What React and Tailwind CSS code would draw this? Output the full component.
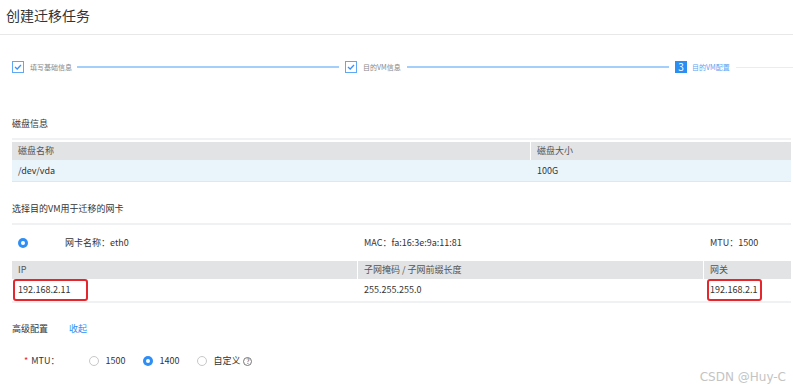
import React from 'react';

const font = { fontFamily: '"Noto Sans CJK SC", "Noto Sans", sans-serif' };

const CheckStep = ({ label, width }) => (
  <>
    <div className="w-[12px] h-[12px] border border-[#5ea8f5] bg-white flex items-center justify-center">
      <svg width="8" height="6" viewBox="0 0 8 6" fill="none">
        <path d="M1 3 L3.2 5 L7 1" stroke="#3d92f2" strokeWidth="1.3" />
      </svg>
    </div>
    <span className={`ml-[6px] text-[7px] leading-[12px] text-[#888] whitespace-nowrap ${width}`}>{label}</span>
  </>
);

const Radio = ({ checked }) =>
  checked ? (
    <span className="w-[10px] h-[10px] rounded-full bg-[#2f8ef5] flex items-center justify-center">
      <span className="w-[4px] h-[4px] rounded-full bg-white" />
    </span>
  ) : (
    <span className="w-[10px] h-[10px] rounded-full border border-[#c8c8c8] bg-white" />
  );

const App = () => {
  return (
    <div className="w-[793px] h-[391px] bg-white relative overflow-hidden text-[#333]" style={font}>
      {/* title */}
      <div className="h-[35px] border-b border-[#e8e8e8] pl-[6px] pt-[4px]">
        <h1 className="text-[14px] leading-[22px] text-[#333]">创建迁移任务</h1>
      </div>

      {/* stepper */}
      <div className="mt-[26px] pl-[12px] flex items-center h-[12px]">
        <CheckStep label="填写基础信息" width="w-[41px]" />
        <div className="ml-[6px] w-[262px] h-[1.5px] bg-[#a3cffa]" />
        <div className="ml-[6px]" />
        <CheckStep label="目的VM信息" width="w-[38px]" />
        <div className="ml-[6px] w-[262px] h-[1.5px] bg-[#a3cffa]" />
        <div className="ml-[6px] w-[12px] h-[12px] bg-[#2b8ef3] text-white text-[10px] leading-[12px] text-center">3</div>
        <span className="ml-[5px] w-[38px] text-[7px] leading-[12px] text-[#5aa2f2] whitespace-nowrap">目的VM配置</span>
        <div className="ml-[6px] flex-1 h-[1px] bg-[#ececec]" />
      </div>

      <div className="pl-[12px] pr-[2px]">
        {/* disk info */}
        <div className="mt-[45px] text-[9px] leading-[12px] text-[#333]">磁盘信息</div>
        <div className="mt-[8px] h-[2px] bg-[#f0f1f2]" />
        <div className="mt-[2px] text-[9px]">
          <div className="grid grid-cols-[519px_1fr] h-[18px] bg-[#e1e3e5] text-[#555]">
            <div className="pl-[6px] leading-[18px] border-r border-white">磁盘名称</div>
            <div className="pl-[6px] leading-[18px]">磁盘大小</div>
          </div>
          <div className="grid grid-cols-[519px_1fr] h-[22px] bg-[#eaf5fb] border-b border-[#e6e6e6]">
            <div className="pl-[6px] leading-[22px]">/dev/vda</div>
            <div className="pl-[6px] leading-[22px]">100G</div>
          </div>
        </div>

        {/* nic */}
        <div className="mt-[21px] text-[9px] leading-[12px] text-[#333]">选择目的VM用于迁移的网卡</div>
        <div className="mt-[8px] h-[2px] bg-[#f0f1f2]" />
        <div className="grid grid-cols-[346px_346px_1fr] h-[36px] items-center text-[9px]">
          <div className="pl-[6px] flex items-center">
            <Radio checked />
            <span className="ml-[37px]">网卡名称：eth0</span>
          </div>
          <div className="pl-[6px]">MAC：fa:16:3e:9a:11:81</div>
          <div className="pl-[6px]">MTU：1500</div>
        </div>
        <div className="text-[9px]">
          <div className="grid grid-cols-[346px_346px_1fr] h-[18px] bg-[#e1e3e5] text-[#555]">
            <div className="pl-[6px] leading-[18px] border-r border-white">IP</div>
            <div className="pl-[6px] leading-[18px] border-r border-white">子网掩码 / 子网前缀长度</div>
            <div className="pl-[6px] leading-[18px]">网关</div>
          </div>
          <div className="grid grid-cols-[346px_346px_1fr] h-[24px] bg-white border-b-2 border-[#f0f1f2]">
            <div className="relative pl-[6px] leading-[22px]">
              192.168.2.11
              <span className="absolute left-[1px] top-0 w-[75px] h-[22px] border-2 border-[#e5262c] rounded-[3px]" />
            </div>
            <div className="pl-[6px] leading-[22px]">255.255.255.0</div>
            <div className="relative pl-[6px] leading-[22px]">
              192.168.2.1
              <span className="absolute left-[3px] top-0 w-[55px] h-[22px] border-2 border-[#e5262c] rounded-[3px]" />
            </div>
          </div>
        </div>

        {/* advanced */}
        <div className="mt-[20px] flex text-[9px] leading-[12px]">
          <span className="text-[#333]">高级配置</span>
          <span className="ml-[21px] text-[#2f8ef5]">收起</span>
        </div>
        <div className="mt-[20px] flex items-center text-[9px] leading-[12px]">
          <span className="ml-[12px] text-[#e5262c]">*</span>
          <span className="ml-[3px]">MTU：</span>
          <span className="ml-[30px] flex items-center"><Radio /></span>
          <span className="ml-[6px]">1500</span>
          <span className="ml-[18px] flex items-center"><Radio checked /></span>
          <span className="ml-[6px]">1400</span>
          <span className="ml-[18px] flex items-center"><Radio /></span>
          <span className="ml-[6px]">自定义</span>
          <span className="ml-[3px] w-[9px] h-[9px] rounded-full border border-[#777] text-[7px] leading-[7px] text-center text-[#555]">?</span>
        </div>
      </div>

      {/* watermark */}
      <div
        className="absolute right-[7px] bottom-[5px] text-[12px] text-[#c4c4c4]"
        style={{ fontFamily: '"DejaVu Sans", sans-serif' }}
      >
        CSDN @Huy-C
      </div>
    </div>
  );
};

export default App;
